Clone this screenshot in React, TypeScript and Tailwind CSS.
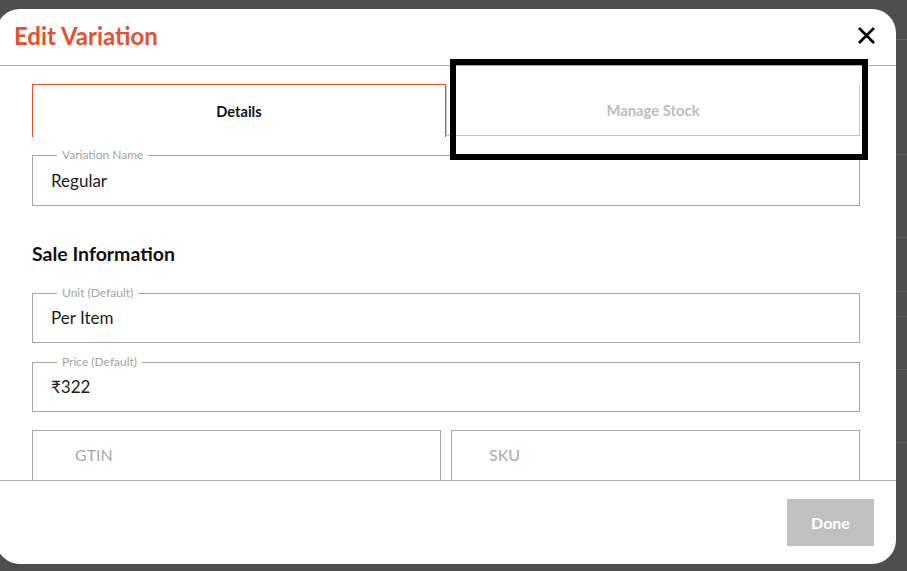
import React from "react";

function OutlinedField({ label, value, className = "" }: { label: string; value: string; className?: string }) {
  return (
    <div className={"relative flex items-center border border-[#a6a6a6] pl-[18px] " + className}>
      <span className="absolute left-[24px] top-[-9px] bg-white px-[5px] text-[12px] leading-[16px] text-[#a3a3a3]">
        {label}
      </span>
      <span className="text-[17px] leading-[20px] text-[#1c1c1c]">{value}</span>
    </div>
  );
}

export default function App() {
  const rows = [40, 115, 83, 54, 25, 53, 73];
  return (
    <div
      className="relative h-[571px] w-[907px] overflow-hidden bg-[#4e4e4e]"
      style={{ fontFamily: "Lato, 'Noto Sans', 'DejaVu Sans', sans-serif" }}
    >
      {/* page behind the overlay */}
      <div className="flex flex-col">
        {rows.map((h, i) => (
          <div key={i} className="border-b border-[#5c5c5c]" style={{ height: h }} />
        ))}
      </div>

      {/* modal */}
      <div className="absolute left-[-4px] top-[9px] flex h-[555px] w-[900px] flex-col overflow-hidden rounded-[24px] bg-white">
        <div className="flex h-[57px] shrink-0 items-center justify-between border-b border-[#a9a9a9] pl-[18px] pr-[20px]">
          <h1 className="mt-[-3px] text-[24px] font-bold leading-[28px] text-[#e4512d]">Edit Variation</h1>
          <svg width="19" height="19" viewBox="0 0 19 19" className="mt-[-3px]">
            <path d="M2 2 L17 17 M17 2 L2 17" stroke="#000" strokeWidth="2.7" strokeLinecap="butt" />
          </svg>
        </div>

        <div className="flex-1 overflow-hidden px-9 pt-[18px]">
          <div className="grid grid-cols-2">
            <div className="flex h-[53px] items-center justify-center border-l border-r border-t border-[#e4512d] pt-[1px] text-[14.6px] font-bold text-[#111]">
              Details
            </div>
            <div className="mt-[1px] flex h-[51px] items-center justify-center border-b border-l border-r border-[#c4c4c4] text-[14.8px] font-bold text-[#bdbdbd]">
              Manage Stock
            </div>
          </div>

          <OutlinedField label="Variation Name" value="Regular" className="mt-[18px] h-[51px]" />

          <h2 className="mt-[36px] text-[19.5px] font-bold leading-[24px] text-[#111]">Sale Information</h2>

          <OutlinedField label="Unit (Default)" value="Per Item" className="mt-[27px] h-[50px]" />
          <OutlinedField label="Price (Default)" value="₹322" className="mt-[19px] h-[50px]" />

          <div className="mt-[18px] grid grid-cols-2 gap-[10px]">
            <div className="flex h-[52px] items-center border border-[#a6a6a6] pl-[42px] pb-[2px] text-[16px] text-[#a8a8a8]">
              GTIN
            </div>
            <div className="flex h-[52px] items-center border border-[#a6a6a6] pl-[37px] pb-[2px] text-[16px] text-[#a8a8a8]">
              SKU
            </div>
          </div>
        </div>

        <div className="flex h-[84px] shrink-0 justify-end border-t border-[#b0b0b0] pr-[22px] pt-[18px]">
          <button className="h-[47px] w-[87px] bg-[#c0c0c0] text-[16px] font-bold text-white">Done</button>
        </div>

        {/* annotation box */}
        <div className="pointer-events-none absolute left-[454px] top-[50px] h-[101px] w-[418px] border-[6px] border-black" />
      </div>
    </div>
  );
}
